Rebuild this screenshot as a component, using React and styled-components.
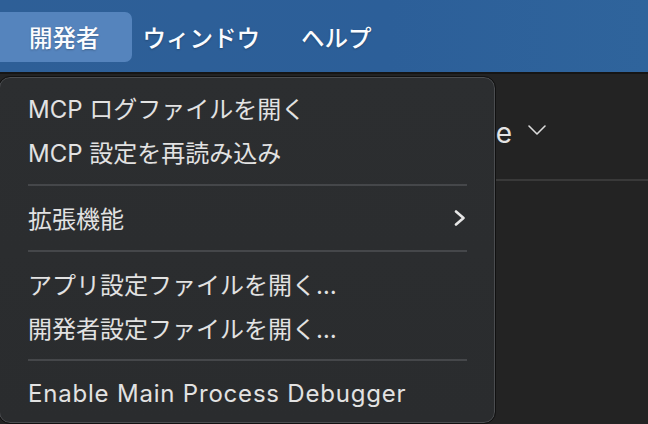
import React from "react";
import styled, { createGlobalStyle } from "styled-components";

const GlobalStyle = createGlobalStyle`
  html, body {
    margin: 0;
    padding: 0;
    background: #232323;
    overflow: hidden;
  }
  body {
    font-family: Inter, "Noto Sans CJK JP", sans-serif;
  }
`;

const Screen = styled.div`
  position: relative;
  width: 648px;
  height: 424px;
  overflow: hidden;
  background: #232323;
  display: flex;
  flex-direction: column;
`;

const MenuBar = styled.div`
  height: 72px;
  flex-shrink: 0;
  display: flex;
  align-items: center;
  gap: 41px;
  background: linear-gradient(90deg, #2e5f97 0%, #2c5f99 60%, #2f649c 100%);
  border-bottom: 2px solid #151515;
`;

const BarItem = styled.div`
  height: 50px;
  margin-top: 2px;
  display: flex;
  align-items: center;
  box-sizing: border-box;
  padding: ${(p) => (p.$active ? "0 32px 0 29px" : "0")};
  margin-right: ${(p) => (p.$active ? "-30px" : "0")};
  border-radius: 0 7px 7px 0;
  background: ${(p) => (p.$active ? "#5584bd" : "transparent")};
  color: #fbfcfe;
  font-family: "Noto Sans CJK JP", sans-serif;
  font-size: 23.5px;
  font-weight: 500;
  text-shadow: 0 1px 2px rgba(0, 0, 0, 0.25);
`;

const Content = styled.div`
  flex: 1;
  display: flex;
  flex-direction: column;
`;

const HeaderRow = styled.div`
  height: 107px;
  display: flex;
  align-items: center;
  justify-content: flex-end;
  gap: 15px;
  padding: 12px 101px 0 0;
  box-sizing: border-box;
  border-bottom: 2px solid #393939;
  color: #e4e4e4;
  font-size: 28px;
`;

const DownIcon = styled.span`
  display: flex;
  margin-bottom: 6px;
`;

const Menu = styled.div`
  position: absolute;
  left: -1px;
  top: 77px;
  width: 496px;
  height: 346px;
  box-sizing: border-box;
  padding: 8px 27px 7px 28px;
  background: linear-gradient(180deg, #2c2e30 0%, #2a2c2e 100%);
  border: 1px solid #4b4d50;
  outline: 1px solid #111;
  border-radius: 11px;
  display: flex;
  flex-direction: column;
`;

const MenuRow = styled.div`
  height: 44px;
  display: flex;
  align-items: center;
  justify-content: space-between;
  color: #e2e2e2;
  font-size: 24px;
  font-weight: 400;
  letter-spacing: ${(p) => (p.$latin ? "0.8px" : "0")};
  white-space: nowrap;
`;

const Separator = styled.div`
  height: 22px;
  display: flex;
  align-items: flex-start;
  padding-top: 10px;
  box-sizing: border-box;
  &::after {
    content: "";
    display: block;
    width: 100%;
    height: 2px;
    background: #45474a;
  }
`;

const Chevron = ({ dir = "right" }) =>
  dir === "right" ? (
    <svg width="14" height="16" viewBox="0 0 14 16" fill="none">
      <polyline
        points="3,1.5 10.5,8 3,14.5"
        stroke="#e6e6e6"
        strokeWidth="2.6"
        strokeLinecap="round"
        strokeLinejoin="round"
      />
    </svg>
  ) : (
    <svg width="20" height="12" viewBox="0 0 20 12" fill="none">
      <polyline
        points="2,2 10,10 18,2"
        stroke="#dcdcdc"
        strokeWidth="1.6"
        strokeLinecap="round"
        strokeLinejoin="round"
      />
    </svg>
  );

export default function App() {
  return (
    <>
      <GlobalStyle />
      <Screen>
        <MenuBar>
          <BarItem $active>開発者</BarItem>
          <BarItem>ウィンドウ</BarItem>
          <BarItem>ヘルプ</BarItem>
        </MenuBar>
        <Content>
          <HeaderRow>
            <span>Claude</span>
            <DownIcon>
              <Chevron dir="down" />
            </DownIcon>
          </HeaderRow>
        </Content>
        <Menu>
          <MenuRow>MCP ログファイルを開く</MenuRow>
          <MenuRow>MCP 設定を再読み込み</MenuRow>
          <Separator />
          <MenuRow>
            拡張機能
            <Chevron />
          </MenuRow>
          <Separator />
          <MenuRow>アプリ設定ファイルを開く…</MenuRow>
          <MenuRow>開発者設定ファイルを開く…</MenuRow>
          <Separator />
          <MenuRow $latin>Enable Main Process Debugger</MenuRow>
        </Menu>
      </Screen>
    </>
  );
}
